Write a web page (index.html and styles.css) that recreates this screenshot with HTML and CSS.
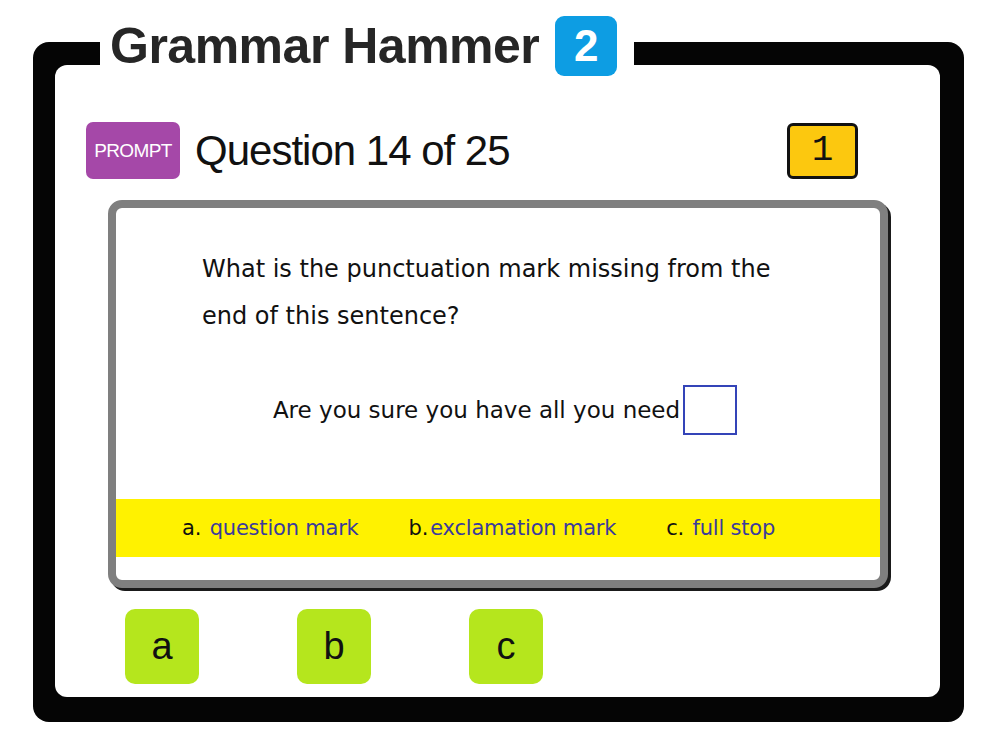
FILE: index.html
```html
<!DOCTYPE html>
<html lang="en">
<head>
<meta charset="utf-8">
<title>Grammar Hammer 2</title>
<link rel="stylesheet" href="styles.css">
</head>
<body>
<div class="frame">
  <div class="title">
    <span class="title-text">Grammar Hammer</span>
    <span class="title-badge">2</span>
  </div>
  <div class="panel">
    <div class="head">
      <div class="prompt">PROMPT</div>
      <div class="qnum">Question 14 of 25</div>
      <div class="level">1</div>
    </div>
    <div class="card">
      <p class="question">What is the punctuation mark missing from the<br>end of this sentence?</p>
      <div class="sentence">
        <span>Are you sure you have all you need</span><span class="blank"></span>
      </div>
      <div class="options">
        <div class="opt"><span class="key">a.</span> <span class="ans">question mark</span></div>
        <div class="opt"><span class="key">b.</span><span class="ans">exclamation mark</span></div>
        <div class="opt"><span class="key">c.</span> <span class="ans">full stop</span></div>
      </div>
    </div>
    <div class="buttons">
      <div class="btn">a</div>
      <div class="btn">b</div>
      <div class="btn">c</div>
    </div>
  </div>
</div>
</body>
</html>
```
FILE: styles.css
```css
html, body {
  margin: 0;
  padding: 0;
  background: #ffffff;
}
body {
  width: 1000px;
  height: 750px;
  overflow: hidden;
  font-family: "Liberation Sans", Arial, sans-serif;
}
.frame {
  position: relative;
  margin: 42px 0 0 33px;
  width: 931px;
  box-sizing: border-box;
  background: #050505;
  border-radius: 16px;
  padding: 23px 24px 25px 22px;
}
.title {
  position: absolute;
  left: 67px;
  top: -26px;
  height: 60px;
  display: flex;
  align-items: center;
  gap: 16px;
  padding: 0 17px 0 10px;
  background: #ffffff;
}
.title-text {
  font-weight: bold;
  font-size: 50px;
  line-height: 1;
  color: #262626;
  letter-spacing: -0.5px;
}
.title-badge {
  width: 62px;
  height: 60px;
  border-radius: 9px;
  background: #0d9de3;
  color: #ffffff;
  font-weight: bold;
  font-size: 44px;
  display: flex;
  align-items: center;
  justify-content: center;
}
.panel {
  background: #ffffff;
  border-radius: 12px;
  padding: 57px 0 13px 0;
}
.head {
  display: flex;
  align-items: center;
  padding: 0 82px 0 31px;
  height: 57px;
}
.prompt {
  width: 94px;
  height: 57px;
  border-radius: 7px;
  background: #a548a8;
  color: #ffffff;
  font-size: 19px;
  letter-spacing: -0.6px;
  display: flex;
  align-items: center;
  justify-content: center;
}
.qnum {
  margin-left: 15px;
  font-size: 42px;
  letter-spacing: -1px;
  color: #111111;
}
.level {
  margin-left: auto;
  width: 71px;
  height: 56px;
  box-sizing: border-box;
  border: 3px solid #111111;
  border-radius: 6px;
  background: #fcc80f;
  font-family: "Liberation Mono", monospace;
  font-size: 36px;
  display: flex;
  align-items: center;
  justify-content: center;
  color: #111111;
}
.card {
  margin: 21px 0 0 53px;
  width: 780px;
  box-sizing: border-box;
  border: 8px solid #7f7f7f;
  border-radius: 14px;
  box-shadow: 3px 3px 0 #1a1a1a;
  background: #ffffff;
  padding: 38px 0 23px 0;
  font-family: "DejaVu Sans", sans-serif;
}
.question {
  margin: 0;
  padding-left: 86px;
  font-size: 24px;
  line-height: 47px;
  color: #111111;
}
.sentence {
  margin-top: 45px;
  display: flex;
  justify-content: center;
  align-items: center;
  height: 50px;
  font-size: 23px;
  color: #111111;
  padding-left: 14px;
}
.blank {
  width: 54px;
  height: 50px;
  box-sizing: border-box;
  border: 2px solid #3444b8;
  margin-left: 3px;
}
.options {
  margin-top: 64px;
  height: 58px;
  background: #fff200;
  display: flex;
  align-items: center;
  gap: 50px;
  padding-left: 66px;
  font-size: 21px;
  letter-spacing: -0.2px;
}
.key {
  color: #111111;
  margin-right: 2px;
}
.ans {
  color: #3b3b9c;
}
.buttons {
  margin: 21px 0 0 70px;
  display: flex;
  gap: 98px;
}
.btn {
  width: 74px;
  height: 75px;
  border-radius: 10px;
  background: #b5e61d;
  font-size: 38px;
  color: #111111;
  display: flex;
  align-items: center;
  justify-content: center;
}
```
